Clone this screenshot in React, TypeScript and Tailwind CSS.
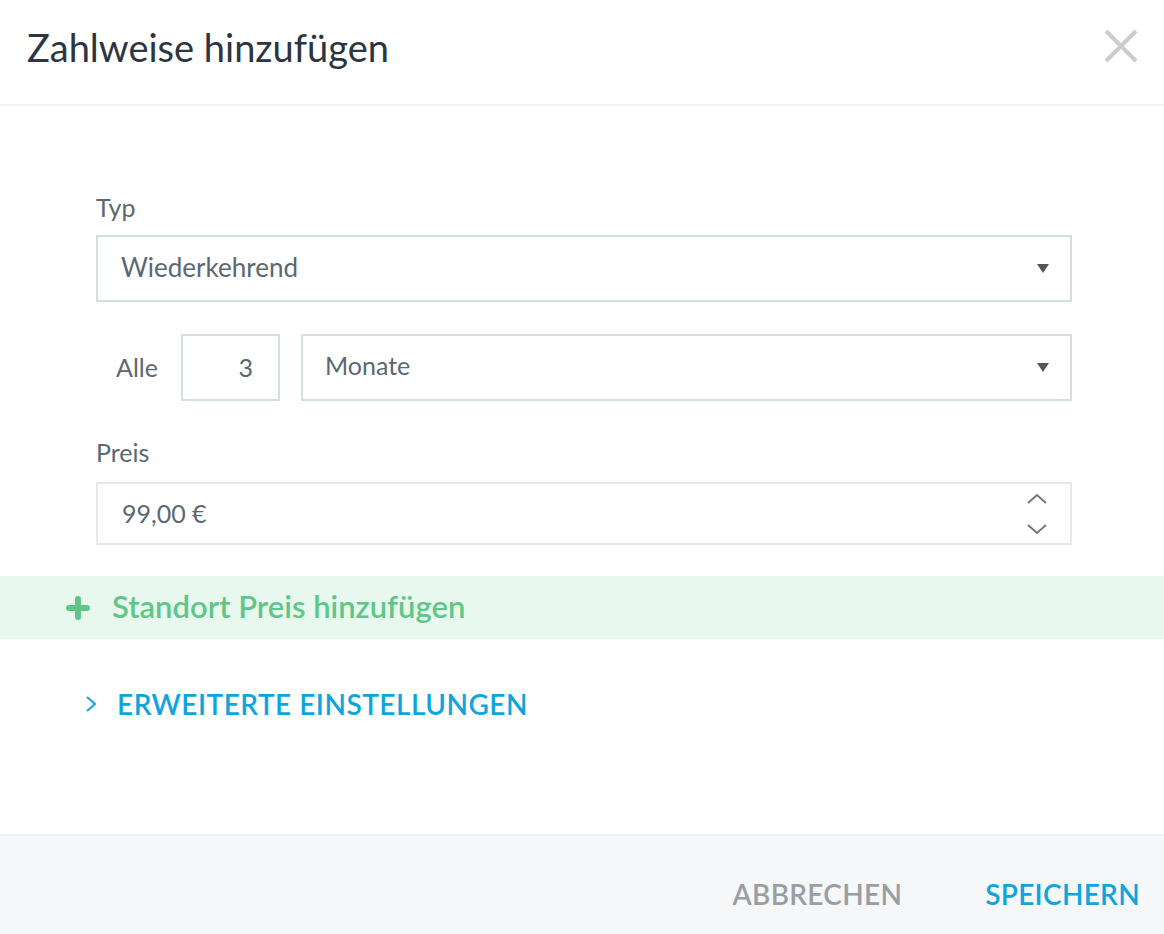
import React from "react";

const Triangle = () => (
  <svg width="14" height="11" viewBox="0 0 14 11" className="shrink-0">
    <path d="M1 1 H13 L7 10 Z" fill="#555" />
  </svg>
);

export default function App() {
  return (
    <div
      className="w-[1164px] h-[934px] bg-white flex flex-col text-[#5b6870]"
      style={{ fontFamily: "Lato, 'Noto Sans', sans-serif" }}
    >
      {/* Header */}
      <div className="h-[106px] shrink-0 border-b-2 border-[#f2f2f2] flex items-center justify-between pl-[27px] pr-[26px]">
        <h1 className="text-[38px] leading-none text-[#2d3640] font-normal -mt-[10px]">Zahlweise hinzufügen</h1>
        <svg width="34" height="34" viewBox="0 0 34 34" className="-mt-[12px]">
          <path d="M2 2 L32 32 M32 2 L2 32" stroke="#cccccc" strokeWidth="4" />
        </svg>
      </div>

      {/* Body */}
      <div className="flex flex-col pt-[87px]">
        <div className="ml-[96px] w-[976px] flex flex-col">
          <label className="text-[25px] leading-[30px] mb-[13px] -mt-[1px]">Typ</label>
          <div className="h-[67px] border-2 border-[#d4dfdf] flex items-center justify-between pl-[23px] pr-[20px]">
            <span className="text-[26px] -mt-[2px]">Wiederkehrend</span>
            <Triangle />
          </div>

          <div className="flex items-center mt-[32px] h-[67px]">
            <span className="text-[25px] ml-[20px] w-[65px]">Alle</span>
            <div className="w-[99px] h-[67px] border-2 border-[#d4dfdf] flex items-center justify-end pr-[25px] text-[25px]">
              3
            </div>
            <div className="flex-1 ml-[21px] h-[67px] border-2 border-[#d4dfdf] flex items-center justify-between pl-[22px] pr-[20px]">
              <span className="text-[25px] -mt-[4px]">Monate</span>
              <Triangle />
            </div>
          </div>

          <label className="text-[25px] leading-[30px] mt-[36px] mb-[15px]">Preis</label>
          <div className="h-[63px] border-2 border-[#e8e8e8] flex items-center justify-between pl-[24px] pr-[22px]">
            <span className="text-[25px]">99,00 €</span>
            <svg width="22" height="46" viewBox="0 0 22 46">
              <path d="M2 12 L11 4 L20 12" stroke="#777" strokeWidth="2" fill="none" />
              <path d="M2 34 L11 42 L20 34" stroke="#777" strokeWidth="2" fill="none" />
            </svg>
          </div>
        </div>

        {/* Green band */}
        <div className="mt-[31px] h-[63px] bg-[#e9f8ef] flex items-center pl-[66px]">
          <svg width="24" height="24" viewBox="0 0 24 24">
            <path d="M12 3 V21 M3 12 H21" stroke="#5ec787" strokeWidth="6" strokeLinecap="round" />
          </svg>
          <span className="ml-[22px] text-[31px] font-semibold text-[#5ec787] -mt-[2px]">Standort Preis hinzufügen</span>
        </div>

        <div className="mt-[50px] flex items-center pl-[85px] h-[30px]">
          <svg width="12" height="18" viewBox="0 0 12 18">
            <path d="M2 2 L10 9 L2 16" stroke="#0ea5dd" strokeWidth="2" fill="none" />
          </svg>
          <span className="ml-[20px] text-[28px] font-semibold text-[#0ea5dd] tracking-[0.5px]">ERWEITERTE EINSTELLUNGEN</span>
        </div>
      </div>

      {/* Footer */}
      <div className="mt-auto h-[100px] border-t-2 border-[#f0f1f3] bg-[#f6f7f9] flex items-center justify-end pr-[24px] pt-[18px] gap-[83px]">
        <button className="text-[28px] font-semibold text-[#999ea3] tracking-[0.3px]">ABBRECHEN</button>
        <button className="text-[28px] font-semibold text-[#0ea5dd] tracking-[0.3px]">SPEICHERN</button>
      </div>
    </div>
  );
}
